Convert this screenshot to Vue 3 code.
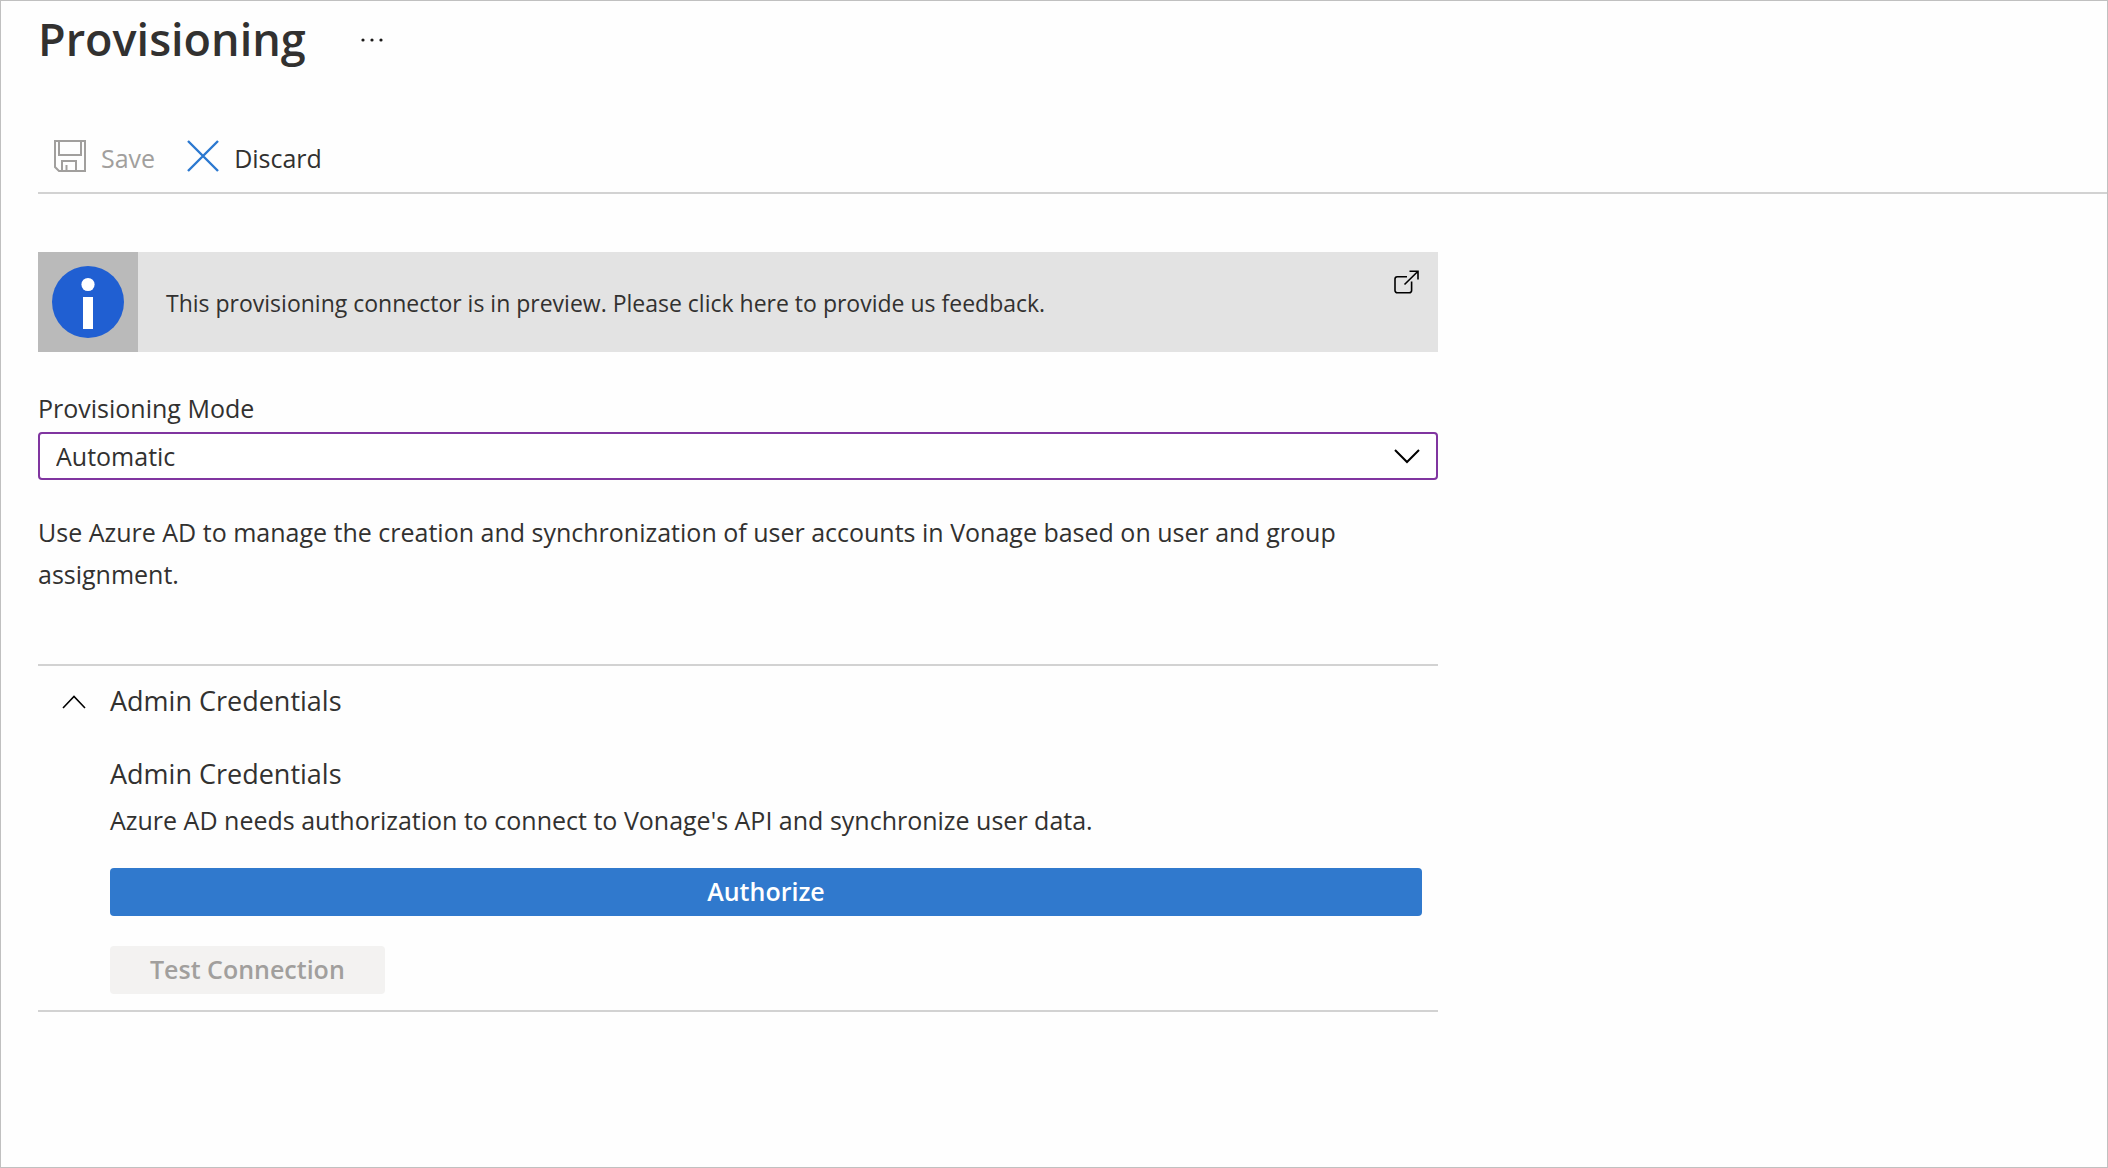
<script setup>
import { ref } from 'vue'

const mode = ref('Automatic')
const expanded = ref(true)
</script>

<template>
  <main class="page">
    <header class="title-row">
      <h1>Provisioning</h1>
      <button class="plain more" type="button" aria-label="More options">
        <svg width="24" height="6" viewBox="0 0 24 6" fill="#1b1a19">
          <circle cx="3" cy="3" r="1.6" /><circle cx="12" cy="3" r="1.6" /><circle cx="21" cy="3" r="1.6" />
        </svg>
      </button>
    </header>

    <div class="toolbar">
      <button class="plain command" type="button" disabled>
        <svg width="32" height="32" viewBox="0 0 32 32" fill="none" stroke="#a19f9d" stroke-width="2">
          <path d="M1 1H31V31H5L1 27Z" />
          <path d="M5 1V15H27V1" />
          <path d="M8 31V21H22V31M12.5 25V31" />
        </svg>
        <span>Save</span>
      </button>
      <button class="plain command" type="button">
        <svg width="32" height="32" viewBox="0 0 32 32" fill="none" stroke="#2b78d0" stroke-width="2.4">
          <path d="M1 1L31 31M31 1L1 31" />
        </svg>
        <span>Discard</span>
      </button>
    </div>

    <div class="content">
      <a class="banner" href="#feedback">
        <span class="banner-icon">
          <svg width="72" height="72" viewBox="0 0 72 72">
            <circle cx="36" cy="36" r="36" fill="#205fd2" />
            <circle cx="36" cy="18.5" r="6.6" fill="#fff" />
            <rect x="31" y="31" width="10" height="32" fill="#fff" />
          </svg>
        </span>
        <span class="banner-text">This provisioning connector is in preview. Please click here to provide us feedback.</span>
        <svg class="external" width="26" height="24" viewBox="0 0 26 24" fill="none" stroke="#000" stroke-width="1.6">
          <path d="M13 6.8H3.3A2.3 2.3 0 0 0 1 9.1V20.5A2.3 2.3 0 0 0 3.3 22.8H15.3A2.3 2.3 0 0 0 17.6 20.5V11.5" />
          <path d="M15.5 1.2H24V9.5M24 1.2L10.5 14.5" />
        </svg>
      </a>

      <div class="field">
        <label for="mode">Provisioning Mode</label>
        <div class="select-wrap">
          <select id="mode" v-model="mode">
            <option>Automatic</option>
            <option>Manual</option>
          </select>
          <svg class="chevron" width="28" height="16" viewBox="0 0 28 16" fill="none" stroke="#000" stroke-width="2">
            <path d="M2 2L14 14L26 2" />
          </svg>
        </div>
      </div>

      <p class="description">
        Use Azure AD to manage the creation and synchronization of user accounts in Vonage based on user and group
        assignment.
      </p>

      <section class="credentials">
        <button class="plain section-toggle" type="button" :aria-expanded="expanded" @click="expanded = !expanded">
          <svg width="24" height="14" viewBox="0 0 24 14" fill="none" stroke="#000" stroke-width="1.6">
            <path d="M1 13L12 1.5L23 13" />
          </svg>
          <span>Admin Credentials</span>
        </button>
        <div v-if="expanded" class="section-body">
          <h2>Admin Credentials</h2>
          <p>Azure AD needs authorization to connect to Vonage's API and synchronize user data.</p>
          <button class="authorize" type="button">Authorize</button>
          <button class="test" type="button" disabled>Test Connection</button>
        </div>
      </section>
    </div>
  </main>
</template>

<style>
body {
  margin: 0;
  background: #fefefe;
}
</style>

<style scoped>
* {
  box-sizing: border-box;
}

.page {
  min-height: 100vh;
  padding-left: 37px;
  border: 1px solid #c0c0c0;
  color: #323130;
  font-family: "Open Sans", "Noto Sans", sans-serif;
  font-size: 25px;
  line-height: 42px;
}

h1,
h2,
p {
  margin: 0;
  font-weight: 400;
}

button,
select {
  color: inherit;
  font: inherit;
}

svg {
  display: block;
  flex: none;
}

.plain {
  display: flex;
  align-items: center;
  padding: 0;
  border: 0;
  background: none;
}

.title-row {
  display: flex;
  align-items: center;
  gap: 54px;
  height: 77px;
}

h1 {
  padding-bottom: 2px;
  font-size: 45px;
  font-weight: 600;
  line-height: 75px;
}

.toolbar {
  display: flex;
  gap: 32px;
  height: 116px;
  padding: 54px 0 0 16px;
  border-bottom: 2px solid #d2d2d2;
}

.command {
  gap: 15px;
  height: 48px;
}

.command span {
  padding-top: 4px;
}

.command:disabled {
  color: #a19f9d;
}

.content {
  max-width: 1400px;
  padding-top: 58px;
}

.banner {
  display: flex;
  height: 100px;
  background: #e3e3e3;
  color: inherit;
  text-decoration: none;
}

.banner-icon {
  display: grid;
  place-items: center;
  width: 100px;
  background: #bababa;
}

.banner-text {
  flex: 1;
  align-self: center;
  padding: 2px 0 0 28px;
  font-size: 23px;
}

.external {
  margin: 18px 18px 0 0;
}

.field {
  padding-top: 35px;
}

.field label {
  display: block;
  height: 45px;
}

.select-wrap {
  display: grid;
  align-items: center;
}

.select-wrap > * {
  grid-area: 1 / 1;
}

select {
  width: 100%;
  height: 48px;
  padding: 0 56px 0 16px;
  border: 2px solid #8035a0;
  border-radius: 4px;
  background: #fff;
  appearance: none;
}

.chevron {
  justify-self: end;
  margin-right: 17px;
  pointer-events: none;
}

.description {
  padding: 31px 64px 69px 0;
}

.credentials {
  padding: 14px 0 16px;
  border-top: 2px solid #d2d2d2;
  border-bottom: 2px solid #d2d2d2;
}

.section-toggle {
  gap: 24px;
  height: 44px;
  padding-left: 24px;
  font-size: 27px;
}

.section-toggle span {
  padding-bottom: 2px;
}

.section-body {
  padding: 28px 16px 0 72px;
}

h2 {
  padding-bottom: 3px;
  font-size: 27px;
  line-height: 44px;
}

.authorize,
.test {
  display: block;
  height: 48px;
  padding: 0 40px 2px;
  border: 0;
  border-radius: 4px;
  font-weight: 600;
}

.authorize {
  width: 100%;
  margin: 27px 0 30px;
  background: #3079cd;
  color: #fff;
}

.test {
  background: #f3f2f1;
  color: #a19f9d;
}
</style>
